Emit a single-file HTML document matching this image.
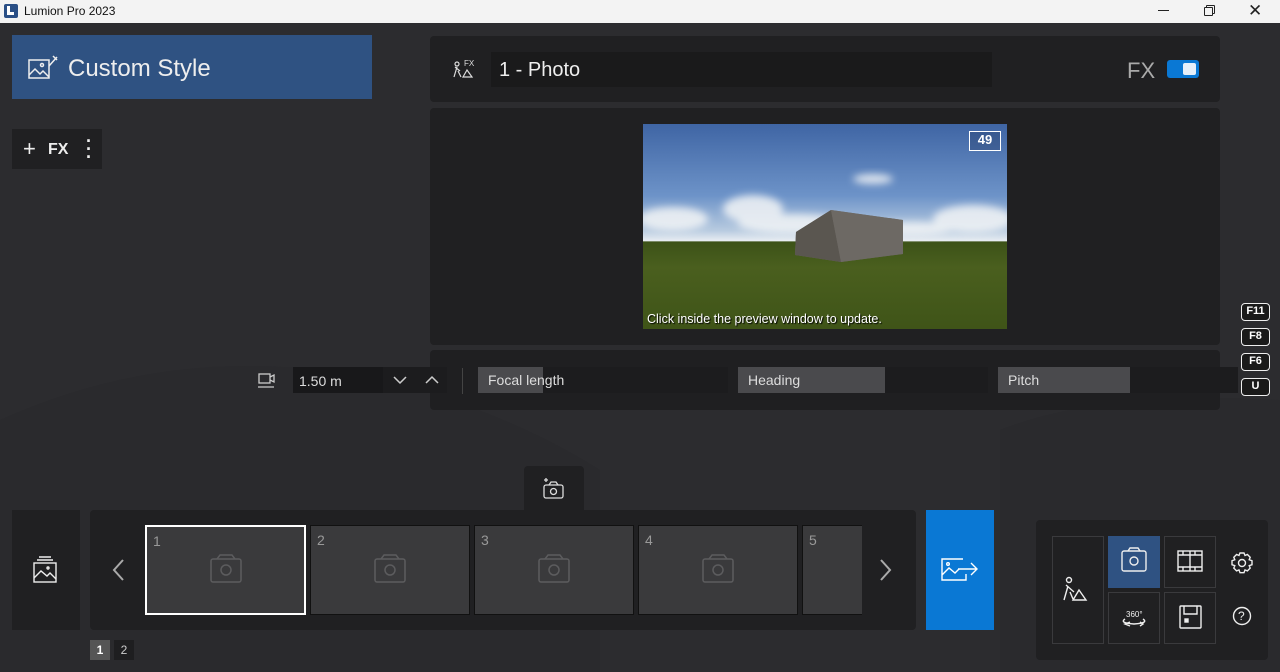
<!DOCTYPE html>
<html><head><meta charset="utf-8"><style>
*{box-sizing:border-box;margin:0;padding:0}
html,body{width:1280px;height:672px;overflow:hidden}
body{background:#2c2c2f;font-family:"Liberation Sans",sans-serif;color:#ddd;position:relative}
.a{position:absolute}
.p{background:#202022;border-radius:4px}
.title{left:0;top:0;width:1280px;height:23px;background:#f3f3f3;color:#111;font-size:12px}
.key{left:1241px;width:29px;height:18px;border:1.5px solid #eee;border-radius:4px;color:#fff;font-size:11px;font-weight:bold;text-align:center;line-height:15px;background:#1a1a1a}
.fld{top:367px;height:26px;background:#1c1c1e;font-size:14px;color:#ddd;line-height:26px}
.fld span{position:absolute;left:10px;top:0}
.fld i{position:absolute;left:0;top:0;bottom:0;background:#4a4a4d}
.th{top:15px;height:90px;background:#3a3a3c;border:1px solid #111;font-size:14px;color:#999}
.th b{font-weight:normal;position:absolute;left:6px;top:6px}
.tb{border:1px solid #3a3a3d;background:#202022}
</style></head><body>
<svg class="a" style="left:0;top:0" width="1280" height="672">
<path d="M0 420 Q200 330 420 390 Q520 420 600 470 L600 672 L0 672Z" fill="#2a2a2d"/>
<path d="M1000 430 Q1100 390 1280 400 L1280 672 L1000 672Z" fill="#2a2a2d"/>
</svg>
<div class="a title"><div class="a" style="left:4px;top:4px;width:14px;height:14px;background:#2a4f86;border-radius:2px"></div><div class="a" style="left:7px;top:6px;width:3px;height:9px;background:#fff"></div><div class="a" style="left:7px;top:12px;width:7px;height:3px;background:#fff"></div>
<span class="a" style="left:24px;top:4px">Lumion Pro 2023</span>
<div class="a" style="left:1158px;top:10px;width:11px;height:1px;background:#222"></div>
<div class="a" style="left:1206px;top:5px;width:9px;height:9px;border:1px solid #222;border-radius:1px;background:#f3f3f3"></div>
<div class="a" style="left:1204px;top:7px;width:9px;height:9px;border:1px solid #222;border-radius:1px;background:#f3f3f3"></div>
<span class="a" style="left:1248px;top:1px;font-size:17px;color:#222">✕</span></div>

<div class="a" style="left:12px;top:35px;width:360px;height:64px;background:#2f5282"></div>
<svg class="a" style="left:28px;top:55px" width="32" height="26" fill="none" stroke="#eee" stroke-width="1.5"><rect x="1" y="5" width="20" height="18"/><path d="M1 20l6-6 5 5 3-3 6 6"/><circle cx="14" cy="10" r="1.5"/><path d="M21 11l8-9M25 1l4 4" /></svg>
<span class="a" style="left:68px;top:55px;font-size:24px;color:#eee">Custom Style</span>

<div class="a" style="left:12px;top:129px;width:90px;height:40px;background:#202022"></div>
<span class="a" style="left:23px;top:136px;font-size:22px;color:#eee">+</span>
<span class="a" style="left:48px;top:141px;font-size:16px;font-weight:bold;color:#eee">FX</span>
<span class="a" style="left:85px;top:137px;font-size:18px;color:#eee;font-weight:bold;line-height:8px;width:8px;text-align:center">·<br>·<br>·</span>

<div class="a p" style="left:430px;top:36px;width:790px;height:66px"></div>
<svg class="a" style="left:452px;top:58px" width="24" height="22" fill="none" stroke="#ddd" stroke-width="1.2"><circle cx="5" cy="6" r="2"/><path d="M3 9l5 4M5 9l-3 10M6 13l3 6M11 19l4-7 5 7z"/><text x="12" y="8" font-size="8" fill="#ddd" stroke="none" font-family="Liberation Sans">FX</text></svg>
<div class="a" style="left:491px;top:52px;width:501px;height:35px;background:#1a1a1b"></div>
<span class="a" style="left:499px;top:59px;font-size:20px;color:#eee">1 - Photo</span>
<span class="a" style="left:1127px;top:58px;font-size:22px;color:#aaa">FX</span>
<div class="a" style="left:1167px;top:60px;width:32px;height:18px;background:#0a78d4;border-radius:3px"></div>
<div class="a" style="left:1183px;top:63px;width:13px;height:12px;background:#e6f0fa;border-radius:2px"></div>

<div class="a p" style="left:430px;top:108px;width:790px;height:237px"></div>
<div class="a" style="left:643px;top:124px;width:364px;height:205px;background:linear-gradient(#3f65a4 0%,#6d93c8 35%,#b8cbe0 52%,#e8edf2 57%,#3c5218 57.5%,#4a5f1e 70%,#3f5418 100%);overflow:hidden">
<svg class="a" style="left:0;top:0" width="364" height="205">
<defs><filter id="b"><feGaussianBlur stdDeviation="4"/></filter></defs>
<g fill="#f2f4f6" opacity=".85" filter="url(#b)"><ellipse cx="30" cy="95" rx="35" ry="12"/><ellipse cx="110" cy="85" rx="30" ry="14"/><ellipse cx="150" cy="100" rx="55" ry="10"/><ellipse cx="330" cy="95" rx="40" ry="14"/><ellipse cx="270" cy="105" rx="40" ry="7"/><ellipse cx="230" cy="55" rx="20" ry="5"/></g>
<polygon points="153,108 188,86 260,96 260,130 198,138 152,131" fill="#6e6a64"/><polygon points="153,108 188,86 198,138 152,131" fill="#5a5650"/><polygon points="188,86 260,96 260,130 198,138" fill="#6d6964"/></svg>
<div class="a" style="left:326px;top:7px;width:32px;height:20px;border:1.5px solid #fff;color:#fff;font-size:13px;font-weight:bold;text-align:center;line-height:15px;background:rgba(30,50,90,.3)">49</div>
<span class="a" style="left:4px;top:188px;font-size:12.5px;color:#fff;text-shadow:1px 1px 1px #000">Click inside the preview window to update.</span>
</div>

<div class="a key" style="top:303px">F11</div>
<div class="a key" style="top:328px">F8</div>
<div class="a key" style="top:353px">F6</div>
<div class="a key" style="top:378px">U</div>

<div class="a p" style="left:430px;top:350px;width:790px;height:60px;background:rgba(30,30,32,.9)"></div>
<svg class="a" style="left:257px;top:372px" width="20" height="18" fill="none" stroke="#ccc" stroke-width="1.3"><rect x="2" y="2" width="11" height="9"/><path d="M13 5l4-2v7l-4-2M1 15h16"/></svg>
<div class="a" style="left:293px;top:367px;width:154px;height:26px;background:#1c1c1e"></div>
<div class="a" style="left:293px;top:367px;width:90px;height:26px;background:#18181a"></div>
<span class="a" style="left:299px;top:373px;font-size:14px;color:#ddd">1.50 m</span>
<svg class="a" style="left:392px;top:373px" width="50" height="14" fill="none" stroke="#ccc" stroke-width="1.5"><path d="M2 4l6 6 6-6M34 10l6-6 6 6"/></svg>
<div class="a" style="left:462px;top:368px;width:1px;height:26px;background:#444"></div>
<div class="a fld" style="left:478px;width:250px"><i style="width:65px"></i><span>Focal length</span></div>
<div class="a fld" style="left:738px;width:250px"><i style="width:147px"></i><span>Heading</span></div>
<div class="a fld" style="left:998px;width:240px"><i style="width:132px"></i><span>Pitch</span></div>

<div class="a" style="left:524px;top:466px;width:60px;height:46px;background:#202022;border-radius:4px 4px 0 0"></div>
<svg class="a" style="left:542px;top:477px" width="24" height="24" fill="none" stroke="#ddd" stroke-width="1.3"><rect x="2" y="8" width="19" height="13" rx="2"/><path d="M7 8l2-3h5l2 3"/><circle cx="11.5" cy="14.5" r="3"/><path d="M4 1v4M2 3h4"/></svg>

<div class="a" style="left:12px;top:510px;width:68px;height:120px;background:#202022"></div>
<svg class="a" style="left:32px;top:555px" width="28" height="30" fill="none" stroke="#eee" stroke-width="1.4"><rect x="2" y="8" width="22" height="19"/><path d="M2 23l7-7 6 5 3-3 6 6M5 5h16M7 2h12"/><circle cx="16" cy="13" r="1"/></svg>
<div class="a p" style="left:90px;top:510px;width:826px;height:120px"></div>
<svg class="a" style="left:110px;top:558px" width="18" height="26" fill="none" stroke="#aaa" stroke-width="2"><path d="M13 2L4 12l9 10"/></svg>
<svg class="a" style="left:877px;top:558px" width="18" height="26" fill="none" stroke="#aaa" stroke-width="2"><path d="M4 2l9 10-9 10"/></svg>
<div class="a" style="left:90px;top:510px;width:772px;height:120px;overflow:hidden">
<div class="a th" style="left:55px;width:161px;border:2px solid #fff"><b>1</b></div>
<div class="a th" style="left:220px;width:160px"><b>2</b></div>
<div class="a th" style="left:384px;width:160px"><b>3</b></div>
<div class="a th" style="left:548px;width:160px"><b>4</b></div>
<div class="a th" style="left:712px;width:70px"><b>5</b></div>
</div>
<svg class="a" style="left:0;top:0" width="900" height="672" fill="none" stroke="#5c5c5e" stroke-width="1.5">
<g id="c"><rect x="211" y="559" width="30" height="23" rx="2"/><path d="M217 559l3-4h12l3 4"/><circle cx="226" cy="570" r="5"/></g>
<use href="#c" x="164"/><use href="#c" x="328"/><use href="#c" x="492"/>
</svg>
<div class="a" style="left:926px;top:510px;width:68px;height:120px;background:#0a78d4"></div>
<svg class="a" style="left:940px;top:555px" width="40" height="30" fill="none" stroke="#fff" stroke-width="1.4"><path d="M23 4H2v21h24v-6M2 20l7-7 6 5 4-4"/><circle cx="8" cy="9" r="1.3"/><path d="M18 14h19M31 8l6 6-6 6"/></svg>
<div class="a" style="left:90px;top:640px;width:20px;height:20px;background:#555;color:#fff;font-size:12px;text-align:center;line-height:20px;font-weight:bold">1</div>
<div class="a" style="left:114px;top:640px;width:20px;height:20px;background:#1e1e20;color:#ccc;font-size:12px;text-align:center;line-height:20px">2</div>

<div class="a p" style="left:1036px;top:520px;width:232px;height:140px"></div>
<div class="a tb" style="left:1052px;top:536px;width:52px;height:108px"></div>
<div class="a" style="left:1108px;top:536px;width:52px;height:52px;background:#2f5282"></div>
<div class="a tb" style="left:1164px;top:536px;width:52px;height:52px"></div>
<div class="a tb" style="left:1108px;top:592px;width:52px;height:52px"></div>
<div class="a tb" style="left:1164px;top:592px;width:52px;height:52px"></div>
<svg class="a" style="left:0;top:0" width="1280" height="672" fill="none" stroke="#eee" stroke-width="1.4">
<circle cx="1069" cy="580" r="2.5"/><path d="M1066 585l8 7M1068 586l-4 14M1070 592l3 7M1073 600l6-10 7 10z"/>
<rect x="1122" y="551" width="24" height="20" rx="2"/><path d="M1128 551l2-3h8l2 3"/><circle cx="1134" cy="561" r="4"/>
<rect x="1178" y="551" width="24" height="20"/><path d="M1178 555h24M1178 567h24M1190 551v20M1183 551v4M1195 551v4M1183 567v4M1195 567v4"/>
<path d="M1125 619q-6 4 9 5q15-1 9-5M1130 626l-5-2 5-2M1140 622l3 2-3 2"/>
<rect x="1180" y="606" width="21" height="22" rx="1"/><path d="M1184 606v8h13v-8"/><rect x="1185" y="619" width="3" height="3" fill="#eee"/>
<path d="M1240 553h4l1 2.5 2.4-1 2.8 2.8-1 2.4 2.8 1v4l-2.8 1 1 2.4-2.8 2.8-2.4-1-1 2.8h-4l-1-2.8-2.4 1-2.8-2.8 1-2.4-2.8-1v-4l2.8-1-1-2.4 2.8-2.8 2.4 1z"/><circle cx="1242" cy="563" r="3.5"/>
<circle cx="1242" cy="616" r="8.5"/>
</svg>
<span class="a" style="left:1126px;top:610px;font-size:8px;color:#eee">360°</span>
<span class="a" style="left:1238px;top:609px;font-size:12px;color:#eee">?</span>
</body></html>
